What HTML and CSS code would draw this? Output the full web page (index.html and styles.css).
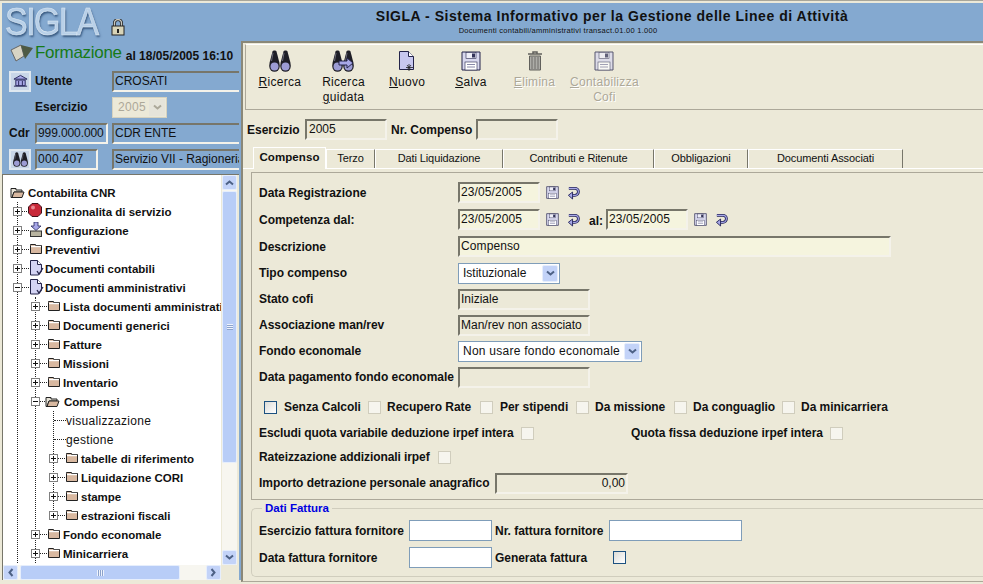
FILE: index.html
```html
<!DOCTYPE html>
<html lang="it">
<head>
    <meta charset="UTF-8">
    <title>SIGLA</title>
    <link rel="stylesheet" href="styles.css">
</head>
<body>
<svg class="defs" width="0" height="0">
    <symbol id="binoc" viewBox="0 0 22 22">
        <path d="M3.500 1.500C4 .2 7 .2 7.500 1.500L10.500 13v3H.5v-3z" fill="#1e1e26"/>
        <path d="M14.500 1.500C15 .2 18 .2 18.500 1.500L21.500 13v3h-10v-3z" fill="#1e1e26"/>
        <path d="M4 3l-1.500 8" stroke="#6a6a78"/><path d="M15 3l-1.500 8" stroke="#6a6a78"/>
        <circle cx="5.500" cy="16.500" r="5.200" fill="#1e1e26"/><circle cx="16.500" cy="16.500" r="5.200" fill="#1e1e26"/>
        <circle cx="5.500" cy="16.500" r="4" fill="#9c9cd4"/><circle cx="16.500" cy="16.500" r="4" fill="#9c9cd4"/>
    </symbol>
    <symbol id="floppy" viewBox="0 0 20 20">
        <path d="M1 1h18v18H1z" fill="#d8d8ee" stroke="#24244a"/>
        <rect x="5" y="1.500" width="10" height="6" fill="#eeeef8" stroke="#24244a" stroke-width=".6"/>
        <rect x="11" y="2.500" width="3" height="4" fill="#34345a"/>
        <rect x="4" y="11" width="12" height="8" fill="#fff" stroke="#24244a" stroke-width=".6"/>
        <path d="M6 13.500h8M6 16h8" stroke="#8888a8"/>
    </symbol>
    <symbol id="refresh" viewBox="0 0 14 16">
        <path d="M2 3.500h6.500a3.800 3.800 0 0 1 0 7.600H5" fill="none" stroke="#24245a" stroke-width="3"/>
        <path d="M2 3.500h6.500a3.800 3.800 0 0 1 0 7.600H5" fill="none" stroke="#a8a8e8" stroke-width="1.200"/>
        <path d="M6 7.500L1.500 11 6 15z" fill="#a8a8e8" stroke="#24245a"/>
    </symbol>
    <symbol id="folder" viewBox="0 0 12 10">
        <path d="M.5 1.500V.5h5v1h6v8H.5z" fill="#d8b8a0" stroke="#222"/>
        <path d="M1 2.500h10" stroke="#fff" stroke-width="1.400"/>
    </symbol>
    <symbol id="folder-open" viewBox="0 0 15 10">
        <path d="M1 2V.500h5v1.500h6v2H4L2 9.500H1z" fill="#e8e4d8" stroke="#222"/>
        <path d="M4 4h10l-2 5.500H2z" fill="#d8b8a0" stroke="#222"/>
    </symbol>
    <symbol id="doc" viewBox="0 0 14 16">
        <path d="M.5.500h7l4 4v7l-3 3.500H.5z" fill="#d4d4f4" stroke="#24244a"/>
        <path d="M7.500.500v4h4" fill="#fff" stroke="#24244a"/>
        <path d="M7 11l2 3 4-6" fill="none" stroke="#24244a" stroke-width="1.300"/>
    </symbol>
    <symbol id="arrow-down" viewBox="0 0 9 7"><path d="M1 1.500l3.500 3 3.500-3" fill="none" stroke="currentColor" stroke-width="2"/></symbol>
</svg>

<div class="page">
    <aside class="side">
        <div class="brand">
            <div class="logo-row">
                <span class="logo">SIGLA</span>
                <svg class="lock" viewBox="0 0 14 17"><path d="M3.500 8V4a3.500 3.500 0 0 1 7 0v4" fill="none" stroke="#222" stroke-width="3"/><path d="M3.500 8V4a3.500 3.500 0 0 1 7 0v4" fill="none" stroke="#c8c8c0" stroke-width="1.400"/><rect x="1" y="7" width="12" height="9" fill="#d8d4b8" stroke="#222"/><rect x="6" y="10" width="2" height="4" fill="#222"/></svg>
            </div>
            <div class="env-row">
                <svg class="book" viewBox="0 0 24 18"><path d="M1 6l10-5 3 11-8 5z" fill="#d8d4c4" stroke="#666"/><path d="M11 1l12 3-8 11-1-3z" fill="#4e5a44"/></svg>
                <span class="env">Formazione</span>
                <span class="env-date">al 18/05/2005 16:10</span>
            </div>
            <div class="info-row">
                <span class="icon-btn"><svg viewBox="0 0 16 14" width="15" height="14"><path d="M1 5l7-4 7 4zM3 6h10v6H3zM1 12.500h14" fill="#a8a8e8" stroke="#26265a"/><path d="M6 7v5M10 7v5" stroke="#26265a"/></svg></span>
                <b class="info-label">Utente</b>
                <div class="field wide">CROSATI</div>
            </div>
            <div class="info-row">
                <span class="icon-blank"></span>
                <b class="info-label">Esercizio</b>
                <div class="select-off"><span>2005</span><i><svg width="9" height="7"><use href="#arrow-down"/></svg></i></div>
            </div>
            <div class="info-row">
                <b class="cdr">Cdr</b>
                <div class="field code">999.000.000</div>
                <div class="field wide">CDR ENTE</div>
            </div>
            <div class="info-row">
                <span class="icon-btn"><svg width="15" height="15"><use href="#binoc"/></svg></span>
                <div class="field code short">000.407</div>
                <div class="field wide">Servizio VII - Ragioneria</div>
            </div>
        </div>

        <div class="tree-frame">
            <div class="tree-top">
                <div class="tree">
                    <div class="node root"><svg class="ic-open" width="15" height="10"><use href="#folder-open"/></svg><b>Contabilita CNR</b></div>
                    <ul class="l1">
                        <li><div class="node"><i class="exp"></i><i class="dots"></i><svg class="ic-stop" viewBox="0 0 14 14"><path d="M4 .5h6L13.500 4v6L10 13.500H4L.5 10V4z" fill="#c82838" stroke="#401018"/><circle cx="5" cy="4.500" r="2" fill="#e88890"/></svg><b>Funzionalita di servizio</b></div></li>
                        <li><div class="node"><i class="exp"></i><i class="dots"></i><svg class="ic-conf" viewBox="0 0 12 15"><path d="M4 0h4v4h3L6 8.500 1 4h3z" fill="#a8a8e8" stroke="#26265a" stroke-width=".8"/><rect x=".5" y="9" width="11" height="5.500" fill="#b8b4a0" stroke="#333"/></svg><b>Configurazione</b></div></li>
                        <li><div class="node"><i class="exp"></i><i class="dots"></i><svg class="ic-fold" width="12" height="10"><use href="#folder"/></svg><b>Preventivi</b></div></li>
                        <li><div class="node"><i class="exp"></i><i class="dots"></i><svg class="ic-doc" width="14" height="16"><use href="#doc"/></svg><b>Documenti contabili</b></div></li>
                        <li><div class="node"><i class="exp minus"></i><i class="dots"></i><svg class="ic-doc" width="14" height="16"><use href="#doc"/></svg><b>Documenti amministrativi</b></div>
                            <ul class="l2">
                                <li><div class="node"><i class="exp"></i><i class="dots"></i><svg class="ic-fold" width="12" height="10"><use href="#folder"/></svg><b>Lista documenti amministrativi</b></div></li>
                                <li><div class="node"><i class="exp"></i><i class="dots"></i><svg class="ic-fold" width="12" height="10"><use href="#folder"/></svg><b>Documenti generici</b></div></li>
                                <li><div class="node"><i class="exp"></i><i class="dots"></i><svg class="ic-fold" width="12" height="10"><use href="#folder"/></svg><b>Fatture</b></div></li>
                                <li><div class="node"><i class="exp"></i><i class="dots"></i><svg class="ic-fold" width="12" height="10"><use href="#folder"/></svg><b>Missioni</b></div></li>
                                <li><div class="node"><i class="exp"></i><i class="dots"></i><svg class="ic-fold" width="12" height="10"><use href="#folder"/></svg><b>Inventario</b></div></li>
                                <li><div class="node"><i class="exp minus"></i><i class="dots"></i><svg class="ic-open ic-open2" width="15" height="10"><use href="#folder-open"/></svg><b>Compensi</b></div>
                                    <ul class="l3">
                                        <li><div class="node leaf"><i class="dots long"></i><span>visualizzazione</span></div></li>
                                        <li><div class="node leaf"><i class="dots long"></i><span>gestione</span></div></li>
                                        <li><div class="node"><i class="exp"></i><i class="dots"></i><svg class="ic-fold" width="12" height="10"><use href="#folder"/></svg><b>tabelle di riferimento</b></div></li>
                                        <li><div class="node"><i class="exp"></i><i class="dots"></i><svg class="ic-fold" width="12" height="10"><use href="#folder"/></svg><b>Liquidazione CORI</b></div></li>
                                        <li><div class="node"><i class="exp"></i><i class="dots"></i><svg class="ic-fold" width="12" height="10"><use href="#folder"/></svg><b>stampe</b></div></li>
                                        <li><div class="node"><i class="exp"></i><i class="dots"></i><svg class="ic-fold" width="12" height="10"><use href="#folder"/></svg><b>estrazioni fiscali</b></div></li>
                                    </ul>
                                </li>
                                <li><div class="node"><i class="exp"></i><i class="dots"></i><svg class="ic-fold" width="12" height="10"><use href="#folder"/></svg><b>Fondo economale</b></div></li>
                                <li><div class="node"><i class="exp"></i><i class="dots"></i><svg class="ic-fold" width="12" height="10"><use href="#folder"/></svg><b>Minicarriera</b></div></li>
                            </ul>
                        </li>
                    </ul>
                </div>
                <div class="vbar">
                    <span class="sb-btn"><svg class="up" width="9" height="7"><use href="#arrow-down"/></svg></span>
                    <span class="vthumb"><i class="grip"></i></span>
                    <span class="sb-space"></span>
                    <span class="sb-btn"><svg width="9" height="7"><use href="#arrow-down"/></svg></span>
                </div>
            </div>
            <div class="hbar">
                <span class="sb-btn"><svg class="left" width="9" height="7"><use href="#arrow-down"/></svg></span>
                <span class="hthumb"><i class="grip-h"></i></span>
                <span class="sb-space"></span>
                <span class="sb-btn"><svg class="right" width="9" height="7"><use href="#arrow-down"/></svg></span>
            </div>
        </div>
    </aside>

    <main class="main">
        <header class="title-bar">
            <div class="title">SIGLA - Sistema Informativo per la Gestione delle Linee di Attività</div>
            <div class="subtitle">Documenti contabili/amministrativi transact.01.00 1.000</div>
        </header>

        <div class="main-body">
            <nav class="toolbar">
                <div class="tool w64"><svg width="22" height="22"><use href="#binoc"/></svg><span><u>R</u>icerca</span></div>
                <div class="tool w64"><svg class="guided" viewBox="0 0 24 22" width="24" height="22"><use href="#binoc" width="22" height="22"/><path d="M7 11h8V8l6 5-6 5v-3H7z" fill="#a8a8e8" stroke="#24244a"/></svg><span>Ricerca<br><u>g</u>uidata</span></div>
                <div class="tool w64"><svg viewBox="0 0 18 22" width="18" height="22"><path d="M1.500 1.500h9l5 5v13h-14z" fill="#c8c8f0" stroke="#24244a"/><path d="M10.500 1.500v5h5" fill="#fff" stroke="#24244a"/><path d="M11 14v7M8 17.500h7M9 15l4 5M13 15l-4 5" stroke="#222" stroke-width=".8"/></svg><span><u>N</u>uovo</span></div>
                <div class="tool w64"><svg width="20" height="20"><use href="#floppy"/></svg><span><u>S</u>alva</span></div>
                <div class="tool w64 off"><svg viewBox="0 0 16 20" width="16" height="20"><path d="M1 3h14M6 3V1h4v2" fill="none" stroke="#333" stroke-width="1.500"/><path d="M2.500 5h11v14h-11z" fill="#999" stroke="#333"/><path d="M5 6v12M8 6v12M11 6v12" stroke="#444"/></svg><span><u>E</u>limina</span></div>
                <div class="tool w76 off"><svg width="20" height="20"><use href="#floppy"/></svg><span><u>C</u>ontabilizza<br>Cofi</span></div>
            </nav>

            <div class="key-row">
                <b class="key-l">Esercizio</b>
                <div class="field key">2005</div>
                <b class="key-l2">Nr. Compenso</b>
                <div class="field key"></div>
            </div>

            <div class="tabs">
                <span class="tab active t1">Compenso</span>
                <span class="tab t2">Terzo</span>
                <span class="tab t3">Dati Liquidazione</span>
                <span class="tab t4">Contributi e Ritenute</span>
                <span class="tab t5">Obbligazioni</span>
                <span class="tab t6">Documenti Associati</span>
            </div>

            <section class="panel">
                <div class="row h27"><b class="lbl">Data Registrazione</b><div class="field date">23/05/2005</div><svg class="mini" width="13" height="13"><use href="#floppy"/></svg><svg class="mini-r" width="13" height="15"><use href="#refresh"/></svg></div>
                <div class="row h27"><b class="lbl">Competenza dal:</b><div class="field date">23/05/2005</div><svg class="mini" width="13" height="13"><use href="#floppy"/></svg><svg class="mini-r" width="13" height="15"><use href="#refresh"/></svg><b class="al">al:</b><div class="field date">23/05/2005</div><svg class="mini" width="13" height="13"><use href="#floppy"/></svg><svg class="mini-r" width="13" height="15"><use href="#refresh"/></svg></div>
                <div class="row h27"><b class="lbl">Descrizione</b><div class="field date desc">Compenso</div></div>
                <div class="row h26"><b class="lbl">Tipo compenso</b><div class="select s102"><span>Istituzionale</span><i><svg width="9" height="7"><use href="#arrow-down"/></svg></i></div></div>
                <div class="row h26"><b class="lbl">Stato cofi</b><div class="field ro">Iniziale</div></div>
                <div class="row h26"><b class="lbl">Associazione man/rev</b><div class="field ro">Man/rev non associato</div></div>
                <div class="row h26"><b class="lbl">Fondo economale</b><div class="select s184"><span>Non usare fondo economale</span><i><svg width="9" height="7"><use href="#arrow-down"/></svg></i></div></div>
                <div class="row h26"><b class="lbl">Data pagamento fondo economale</b><div class="field ro"></div></div>

                <div class="row checks">
                    <i class="box dark"></i><b class="c1">Senza Calcoli</b>
                    <i class="box"></i><b class="c2">Recupero Rate</b>
                    <i class="box"></i><b class="c3">Per stipendi</b>
                    <i class="box"></i><b class="c4">Da missione</b>
                    <i class="box"></i><b class="c5">Da conguaglio</b>
                    <i class="box"></i><b class="c6">Da minicarriera</b>
                </div>
                <div class="row h24"><b class="q1">Escludi quota variabile deduzione irpef intera</b><i class="box"></i><b class="q2">Quota fissa deduzione irpef intera</b><i class="box"></i></div>
                <div class="row h24"><b class="q3">Rateizzazione addizionali irpef</b><i class="box"></i></div>
                <div class="row h26 amount-row"><b class="q4">Importo detrazione personale anagrafico</b><div class="field amount">0,00</div></div>
            </section>

            <fieldset class="invoice">
                <legend>Dati Fattura</legend>
                <div class="row h27"><b class="i1">Esercizio fattura fornitore</b><div class="edit e83"></div><b class="i2">Nr. fattura fornitore</b><div class="edit e133"></div></div>
                <div class="row h27"><b class="i1">Data fattura fornitore</b><div class="edit e83"></div><b class="i3">Generata fattura</b><i class="box dark"></i></div>
            </fieldset>
        </div>
    </main>
</div>
</body>
</html>
```
FILE: styles.css
```css
html, body{
    margin: 0;
    height: 100%;
    overflow: hidden;
    background: #ece9d8;
}
body{
    font: 12px "Liberation Sans", Arial, sans-serif;
    color: #111;
}
.defs{
    display: block;
    height: 0;
}
i{
    font-style: normal;
}
.page{
    display: flex;
    align-items: flex-start;
    height: 584px;
    padding-top: 2px;
    box-sizing: border-box;
    border-top: 1px solid #a8a69a;
}
/* left frame */
.side{
    width: 241px;
    height: 577px;
    flex: none;
    box-sizing: border-box;
    padding-left: 2px;
    background: #84a9d0;
    background-clip: content-box;
    overflow: hidden;
}
.brand{
    height: 169px;
}
.logo-row{
    display: flex;
    align-items: center;
    height: 36px;
    padding-left: 3px;
}
.logo{
    font: 34px/26px "Liberation Sans", sans-serif;
    letter-spacing: -1.500px;
    transform: scaleY(1.15);
    color: #b8d0e8;
    -webkit-text-stroke: .5px #dce8f3;
    text-shadow: 1px 2px 2px #34557c;
    flex: none;
}
.lock{
    width: 14px;
    height: 17px;
    margin: 12px 0 0 13px;
    flex: none;
}
.env-row{
    display: flex;
    align-items: flex-end;
    box-sizing: border-box;
    height: 29px;
    padding: 0 0 3px 8px;
}
.book{
    width: 24px;
    height: 18px;
    margin-bottom: 3px;
}
.env{
    font-size: 17px;
    line-height: 24px;
    letter-spacing: -.3px;
    color: #177a17;
    margin-left: 1px;
}
.env-date{
    font-weight: bold;
    line-height: 18px;
    margin-left: 4px;
    white-space: nowrap;
}
.info-row{
    display: flex;
    align-items: center;
    height: 26px;
    padding-left: 7px;
    white-space: nowrap;
}
.icon-btn{
    display: flex;
    align-items: center;
    justify-content: center;
    width: 18px;
    height: 17px;
    background: #c8d6e8;
    border: 2px solid #dfe8f0;
    flex: none;
}
.icon-blank{
    width: 22px;
    flex: none;
}
.info-label{
    width: 77px;
    margin-left: 4px;
    flex: none;
}
.cdr{
    width: 26px;
    flex: none;
}
.field{
    box-sizing: border-box;
    height: 21px;
    line-height: 16px;
    padding-left: 1px;
    border: 2px solid;
    border-color: #77766a #f4f2ea #f4f2ea #77766a;
    white-space: nowrap;
    overflow: hidden;
    flex: none;
}
.field.wide{
    width: 127px;
    border-right: 0;
}
.field.code{
    width: 73px;
    margin-right: 4px;
    letter-spacing: -.1px;
}
.field.code.short{
    width: 63px;
    margin-left: 4px;
    margin-right: 14px;
    letter-spacing: .3px;
}
.select-off{
    display: flex;
    align-items: center;
    justify-content: space-between;
    box-sizing: border-box;
    width: 55px;
    height: 21px;
    padding: 0 1px 0 5px;
    background: #ece9d8;
    border: 1px solid #d6d2c0;
    color: #aca899;
    letter-spacing: .3px;
}
.select-off i{
    display: flex;
    align-items: center;
    justify-content: center;
    width: 16px;
    height: 17px;
    background: #e6e4da;
    color: #aca899;
}
/* tree */
.tree-frame{
    box-sizing: border-box;
    width: 237px;
    height: 406px;
    margin-top: 2px;
    background: #ece9d8;
    border-top: 1px solid #77766a;
    border-left: 1px solid #77766a;
}
.tree-top{
    display: flex;
    height: 390px;
}
.tree{
    width: 218px;
    height: 390px;
    padding-top: 8px;
    box-sizing: border-box;
    background: #fff;
    overflow: hidden;
    flex: none;
}
.tree ul{
    list-style: none;
    margin: 0;
    padding: 0;
    border-left: 1px dotted #222;
}
.l1{
    margin-left: 14px !important;
}
.l2, .l3{
    margin-left: 17px !important;
}
.l3{
    height: 105px;
    margin-bottom: 9px !important;
}
.node{
    display: flex;
    align-items: center;
    height: 19px;
    margin-left: -5px;
    font-size: 11.500px;
    white-space: nowrap;
}
.node.root{
    margin-left: 0;
    padding-left: 7px;
}
.node.leaf{
    margin-left: 0;
}
.node span{
    font-size: 12px;
    letter-spacing: .3px;
}
.exp{
    position: relative;
    box-sizing: border-box;
    width: 9px;
    height: 9px;
    background: #fff;
    border: 1px solid #808080;
    flex: none;
}
.exp::before{
    content: "";
    position: absolute;
    left: 1px;
    top: 3px;
    width: 5px;
    height: 1px;
    background: #111;
}
.exp::after{
    content: "";
    position: absolute;
    left: 3px;
    top: 1px;
    width: 1px;
    height: 5px;
    background: #111;
}
.exp.minus::after{
    display: none;
}
.dots{
    width: 7px;
    height: 0;
    border-top: 1px dotted #222;
    flex: none;
}
.dots.long{
    width: 12px;
}
.ic-open{
    margin-right: 3px;
    flex: none;
}
.ic-open2{
    margin-left: -2px;
    margin-right: 4px;
}
.ic-fold{
    width: 12px;
    margin: -2px 3px 0 1px;
    flex: none;
}
.ic-doc{
    margin: -2px 1px 0 1px;
    flex: none;
}
.ic-stop{
    width: 14px;
    height: 14px;
    margin: -3px 3px 0 -1px;
    flex: none;
}
.ic-conf{
    width: 12px;
    height: 15px;
    margin: -3px 3px 0 1px;
    flex: none;
}
/* scrollbars */
.vbar{
    display: flex;
    flex-direction: column;
    width: 15px;
    margin-left: 1px;
    background: #f7f6f0;
    flex: none;
}
.hbar{
    display: flex;
    width: 218px;
    height: 15px;
    background: #f7f6f0;
}
.sb-btn{
    display: flex;
    align-items: center;
    justify-content: center;
    box-sizing: border-box;
    width: 15px;
    height: 15px;
    background: #c3d3f8;
    border: 1px solid #e6eefc;
    border-radius: 2px;
    color: #4d6185;
    flex: none;
}
.up{
    transform: rotate(180deg);
}
.left{
    transform: rotate(90deg);
}
.right{
    transform: rotate(-90deg);
}
.sb-space{
    flex: 1;
}
.vthumb{
    display: flex;
    align-items: center;
    justify-content: center;
    box-sizing: border-box;
    height: 272px;
    margin-top: 1px;
    background: #b8cdf7;
    border: 1px solid #e6eefc;
    border-radius: 2px;
}
.grip{
    width: 6px;
    height: 6px;
    background: repeating-linear-gradient(#eef3fd 0 1px, #8ca3cc 1px 2px);
}
.hthumb{
    display: flex;
    align-items: center;
    justify-content: center;
    box-sizing: border-box;
    width: 160px;
    margin-left: 2px;
    background: #b8cdf7;
    border: 1px solid #e6eefc;
    border-radius: 2px;
}
.grip-h{
    width: 7px;
    height: 6px;
    background: repeating-linear-gradient(90deg, #eef3fd 0 1px, #8ca3cc 1px 2px);
}
/* right frame */
.main{
    flex: 1;
    min-width: 0;
}
.title-bar{
    box-sizing: border-box;
    height: 38px;
    padding-top: 6px;
    background: #84a9d0;
    text-align: center;
}
.title{
    font-size: 14px;
    font-weight: bold;
    line-height: 14px;
    letter-spacing: .53px;
    color: #111;
}
.subtitle{
    font-size: 7.500px;
    line-height: 12px;
    margin-top: 2px;
    padding-right: 108px;
    letter-spacing: .27px;
}
.main-body{
    box-sizing: border-box;
    height: 541px;
    border-top: 2px solid #8a8878;
    border-left: 2px solid #8a8878;
    border-bottom: 1px solid #aca899;
}
.toolbar{
    display: flex;
    box-sizing: border-box;
    height: 66px;
    margin: 1px 0 0 2px;
    padding: 5px 0 0 2px;
    border: 1px solid #aca899;
    border-right: 0;
    border-top-color: #fff;
}
.tool{
    display: flex;
    flex-direction: column;
    align-items: center;
    text-align: center;
    line-height: 15px;
    letter-spacing: .3px;
}
.tool svg{
    height: 22px;
    margin-bottom: 3px;
}
.w64{
    width: 63.700px;
}
.w76{
    width: 76px;
}
.off{
    color: #aca899;
    text-shadow: 1px 1px 0 #fff;
}
.off svg{
    opacity: .75;
}
.key-row{
    display: flex;
    align-items: center;
    height: 21px;
    margin-top: 9px;
    padding-left: 4px;
}
.key-l{
    width: 58px;
}
.key-l2{
    width: 84px;
    margin-left: 4px;
    margin-right: 1px;
}
.field.key{
    width: 82px;
    padding-left: 2px;
}
.tabs{
    display: flex;
    align-items: flex-end;
    height: 22px;
    margin-top: 7px;
    padding-left: 10px;
    border-bottom: 1px solid #fff;
    box-sizing: border-box;
}
.tab{
    box-sizing: border-box;
    height: 19px;
    line-height: 17px;
    text-align: center;
    letter-spacing: -.1px;
    font-size: 11px;
    border-top: 1px solid #fff;
    border-right: 1px solid #77766a;
    border-left: 1px solid #fff;
}
.tab.active{
    height: 22px;
    font-weight: bold;
    font-size: 11.500px;
    line-height: 18px;
    letter-spacing: .1px;
    margin-bottom: -1px;
    background: #ece9d8;
    border-right-color: #fff;
}
.t1{ width: 73px; }
.t2{ width: 49px; }
.t3{ width: 128px; }
.t4{ width: 151px; }
.t5{ width: 94px; }
.t6{ width: 155px; }
.panel{
    box-sizing: border-box;
    height: 328px;
    margin: 3px 0 0 8px;
    padding: 6px 0 0 7px;
    border: 1px solid #aca899;
    border-right: 0;
}
.row{
    display: flex;
    align-items: center;
    white-space: nowrap;
}
.row b{
    flex: none;
    letter-spacing: -.04px;
}
.h27{ height: 27px; }
.h26{ height: 26px; }
.h24{ height: 24px; }
.lbl{
    width: 199px;
}
.field.date{
    width: 82px;
    height: 21px;
    padding-left: 1px;
    background: #f5f4de;
    letter-spacing: .1px;
}
.field.desc{
    width: 433px;
}
.field.ro{
    width: 132px;
}
.mini{
    margin-left: 6px;
    flex: none;
}
.mini-r{
    margin-left: 8px;
    flex: none;
}
.al{
    margin: 2px 4px 0 9px;
    width: 13px;
}
.select{
    display: flex;
    align-items: center;
    justify-content: space-between;
    box-sizing: border-box;
    height: 21px;
    padding: 0 1px 0 4px;
    background: #fff;
    border: 1px solid #7f9db9;
}
.select i{
    display: flex;
    align-items: center;
    justify-content: center;
    width: 16px;
    height: 17px;
    background: #c3d3f8;
    border: 1px solid #e6eefc;
    box-sizing: border-box;
    border-radius: 2px;
    color: #4d6185;
}
.s102{ width: 102px; }
.s184{ width: 184px; letter-spacing: .25px; }
.box{
    display: block;
    box-sizing: border-box;
    width: 13px;
    height: 13px;
    background: #f6f5ee;
    border: 1px solid #d0cdbd;
    flex: none;
}
.box.dark{
    border-color: #1c5180;
    background: linear-gradient(135deg, #dcdcd7, #fff);
}
.checks{
    height: 28px;
    margin-top: 3px;
    padding-left: 5px;
}
.c1{ margin: 0 9px 0 7px; width: 75px; }
.c2{ margin: 0 9px 0 6px; width: 84px; }
.c3{ margin: 0 9px 0 7px; width: 67px; }
.c4{ margin: 0 9px 0 6px; width: 70px; }
.c5{ margin: 0 9px 0 6px; width: 80px; }
.c6{ margin: 0 9px 0 6px; width: 90px; }
.row .q1{ width: 253px; margin-right: 9px; letter-spacing: -.09px; }
.q2{ width: 190px; margin: 0 9px 0 97px; }
.row .q3{ width: 170px; margin-right: 9px; letter-spacing: -.09px; }
.q4{ width: 231px; margin-right: 5px; }
.amount-row{
    margin-top: 1px;
}
.field.amount{
    width: 133px;
    text-align: right;
    padding-right: 1px;
}
.invoice{
    box-sizing: border-box;
    height: 75px;
    margin: 2px 0 0 8px;
    padding: 3px 0 0 7px;
    border: 1px solid #d0cdbd;
    border-right: 0;
    border-radius: 5px 0 0 5px;
}
.invoice legend{
    margin-left: 3px;
    padding: 0 3px;
    font-weight: bold;
    font-size: 11.500px;
    line-height: 12px;
    color: #0000e0;
}
.i1{ width: 150px; }
.i2{ width: 114px; margin-left: 3px; }
.i3{ width: 118px; margin: 0 0 0 3px; }
.edit{
    box-sizing: border-box;
    height: 21px;
    background: #fff;
    border: 1px solid #7f9db9;
    flex: none;
}
.e83{ width: 83px; }
.e133{ width: 133px; }
```
